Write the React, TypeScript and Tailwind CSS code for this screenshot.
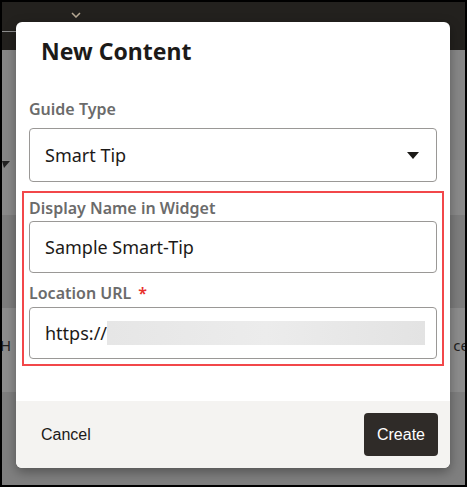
import React from 'react';

const Field = ({ label, required, h = 'h-[26px]', children }: { label: string; required?: boolean; h?: string; children: React.ReactNode }) => (
  <div className="flex flex-col">
    <div className={`${h} flex items-center text-[16px] font-semibold text-[#6b6b6b] leading-none`}>
      {label}
      {required && <span className="ml-[7px] text-[#e8302c]">*</span>}
    </div>
    {children}
  </div>
);

const NewContentDialog = () => {
  return (
    <div className="absolute left-[14px] top-[20px] w-[434px] rounded-[6px] bg-white shadow-[0_4px_12px_rgba(0,0,0,0.35)] overflow-hidden font-['Noto_Sans',sans-serif]">
      <div className="px-[25px] pt-[14px] h-[73px]">
        <h2 className="text-[23px] font-bold text-[#1c1a18] leading-[30px]">New Content</h2>
      </div>

      <div className="px-[12px]">
        <div className="px-[1px]">
          <Field label="Guide Type" h="h-[28px]">
            <div className="mt-[5px] h-[54px] rounded-[4px] border border-[#9a9896] flex items-center justify-between pl-[15px] pr-[17px]">
              <span className="text-[18px] text-[#1c1a18]">Smart Tip</span>
              <svg width="12" height="7" viewBox="0 0 12 7"><path d="M0 0h12L6 7z" fill="#1c1a18" /></svg>
            </div>
          </Field>
        </div>

        <div className="mt-[9px] -mx-[6px] border-2 border-[#f2474a] px-[5px] pt-[2px] pb-[5px] flex flex-col gap-[6px]">
          <Field label="Display Name in Widget">
            <div className="h-[52px] rounded-[4px] border border-[#9a9896] flex items-center pl-[15px]">
              <span className="text-[18px] text-[#1c1a18]">Sample Smart-Tip</span>
            </div>
          </Field>
          <Field label="Location URL" required h="h-[28px]">
            <div className="h-[52px] rounded-[4px] border border-[#9a9896] flex items-center pl-[15px] pr-[11px]">
              <span className="text-[18px] text-[#1c1a18]">https://</span>
              <div className="flex-1 h-[24px] bg-gradient-to-r from-[#e6e6e6] via-[#ececec] to-[#e3e3e3]" />
            </div>
          </Field>
        </div>
      </div>

      <div className="mt-[35px] h-[67px] bg-[#f4f3f1] flex items-center justify-between pl-[25px] pr-[12px] font-['Liberation_Sans',Arial,sans-serif]">
        <span className="text-[16px] text-[#1c1a18]">Cancel</span>
        <button className="h-[43px] w-[74px] rounded-[4px] bg-[#2f2b28] text-white text-[16px]">Create</button>
      </div>
    </div>
  );
};

export default function App() {
  return (
    <div className="w-[467px] h-[487px] border-2 border-black bg-[#868686] relative overflow-hidden">
      <div className="h-[48px] bg-[#23211e] relative">
        <svg className="absolute left-[69px] top-[10px]" width="10" height="6" viewBox="0 0 10 6">
          <path d="M1 1l4 4 4-4" stroke="#b8aa95" strokeWidth="1.5" fill="none" />
        </svg>
        <div className="absolute left-0 top-[29px] w-[14px] h-[1px] bg-[#8d8d8d]" />
      </div>
      <div className="h-[110px] bg-[#878787] relative">
        <svg className="absolute left-0 top-[111px]" width="8" height="8" viewBox="0 0 8 8"><path d="M0 0h8L2 7z" fill="#222" /></svg>
      </div>
      <div className="h-[55px] bg-[#8a8a8a]" />
      <div className="h-[93px] bg-[#7d7d7d]" />
      <div className="h-[84px] bg-[#8d8d8d] relative text-[#222] text-[15px] font-['Noto_Sans',sans-serif]">
        <span className="absolute left-[-2px] top-[26px]">H</span>
        <span className="absolute right-[-4px] top-[26px]">ce</span>
      </div>
      <div className="h-[100px] bg-[#7f7f7f]" />
      <NewContentDialog />
    </div>
  );
}
